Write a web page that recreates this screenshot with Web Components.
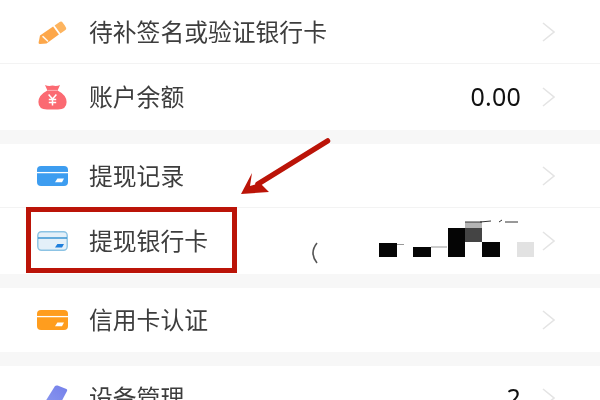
<!DOCTYPE html>
<html lang="zh">
<head>
<meta charset="utf-8">
<title>钱包</title>
<style>
html, body { margin: 0; height: 400px; overflow: hidden; background: #fff; }
body { font-family: "Noto Sans CJK SC", "Noto Sans", sans-serif; }
</style>
</head>
<body>
<wallet-page>
  <menu-group>
    <menu-row h="64">
      <svg slot="icon" width="31" height="26" viewBox="0 0 31 26">
        <path d="M17.6 6.4 L22.6 2.9 Q23.8 2.2 25 2.8 L27.8 6.6 L29.2 9 Q29.4 10.4 28.4 11.1 L23.4 14.6 Z" fill="#fdb45f"/>
        <path d="M16.1 7.4 L21.9 15.6 L9.5 24.6 L3 25 Q1.5 25 1.6 23.5 L3 16.5 Z" fill="#fda74a"/>
        <path d="M6 17.6 L10.6 22" stroke="#fff" stroke-width="1.5" stroke-linecap="round" opacity=".9"/>
      </svg>
      <span>待补签名或验证银行卡</span>
    </menu-row>
    <menu-row h="66">
      <svg slot="icon" width="31" height="26" viewBox="0 0 31 26">
        <path d="M8 1 Q11 2.4 15.5 1.6 Q20 2.4 23 1 L20.6 6.4 Q29.6 11 29.6 18 Q29.6 25.4 21 25.4 L10 25.4 Q1.4 25.4 1.4 18 Q1.4 11 10.4 6.4 Z" fill="#fb6a72"/>
        <path d="M10.4 6.4 H20.6" stroke="#fdb0b4" stroke-width="1"/>
        <path d="M11.6 10.6 L15.5 15 L19.4 10.6 M15.5 15 V21.4 M11.8 15.6 H19.2 M11.8 18.4 H19.2" fill="none" stroke="#fff" stroke-width="1.5"/>
      </svg>
      <span>账户余额</span>
      <span slot="value">0.00</span>
    </menu-row>
  </menu-group>
  <menu-group>
    <menu-row h="64">
      <bank-card slot="icon" color="#3d9df0"></bank-card>
      <span>提现记录</span>
    </menu-row>
    <menu-row h="66">
      <svg slot="icon" width="31" height="20" viewBox="0 0 31 20">
        <rect x=".8" y=".8" width="29.4" height="18.4" rx="3.6" fill="#e4f0f9" stroke="#8cc3e4" stroke-width="1.4"/>
        <path d="M1 7 H30" stroke="#2f8fd0" stroke-width="1.4"/>
        <path d="M20.4 13 H27 L25 16.4 H18 Z" fill="#1f7fdc"/>
      </svg>
      <span>提现银行卡</span>
    </menu-row>
  </menu-group>
  <menu-group>
    <menu-row h="64">
      <bank-card slot="icon" color="#ff9d1e"></bank-card>
      <span>信用卡认证</span>
    </menu-row>
  </menu-group>
  <menu-group>
    <menu-row h="64">
      <svg slot="icon" width="31" height="26" viewBox="0 0 31 26">
        <defs>
          <linearGradient id="dev" x1="0" y1="1" x2="1" y2="0">
            <stop offset="0" stop-color="#8f9cf0"/>
            <stop offset="1" stop-color="#7480ea"/>
          </linearGradient>
        </defs>
        <path d="M18 1 Q19 0 20.6 .6 L29.4 4 Q30.6 4.8 30 6 L20 25 L3 25 Z" fill="url(#dev)"/>
      </svg>
      <span>设备管理</span>
      <span slot="value">2</span>
    </menu-row>
  </menu-group>
  <annotation-layer></annotation-layer>
</wallet-page>

<script>
class WalletPage extends HTMLElement {
  constructor() {
    super();
    this.attachShadow({ mode: 'open' });
  }
  connectedCallback() {
    this.shadowRoot.innerHTML = `
      <style>
        :host { display: block; position: relative; width: 600px; height: 400px; overflow: hidden; background: #fff; }
        .list { display: flex; flex-direction: column; gap: 14px; background: #f7f7f7; filter: blur(.35px); }
      </style>
      <div class="list"><slot></slot></div>
      <slot name="overlay"></slot>
    `;
    const layer = this.querySelector('annotation-layer');
    if (layer) layer.slot = 'overlay';
  }
}

class MenuGroup extends HTMLElement {
  constructor() {
    super();
    this.attachShadow({ mode: 'open' });
  }
  connectedCallback() {
    this.shadowRoot.innerHTML = `
      <style>
        :host { display: flex; flex-direction: column; background: #fff; }
      </style>
      <slot></slot>
    `;
  }
}

class MenuRow extends HTMLElement {
  constructor() {
    super();
    this.attachShadow({ mode: 'open' });
  }
  connectedCallback() {
    const h = this.getAttribute('h') || 64;
    this.shadowRoot.innerHTML = `
      <style>
        :host {
          display: grid;
          grid-template-columns: 31px 1fr auto 13px;
          column-gap: 21px;
          align-items: center;
          box-sizing: border-box;
          height: ${h}px;
          padding: 0 45px 0 37px;
          border-bottom: 1px solid #f3f3f3;
          background: #fff;
          color: #3d3d3d;
          font-size: 23.8px;
          line-height: 30px;
        }
        :host(:last-child) { border-bottom: 0; }
        .icon { display: flex; justify-content: center; align-items: center; }
        .label { padding-bottom: 2px; }
        .value { font-family: "Noto Sans", sans-serif; font-size: 25px; letter-spacing: .2px; color: #111; padding-bottom: 2px; }
        svg { display: block; }
      </style>
      <div class="icon"><slot name="icon"></slot></div>
      <div class="label"><slot></slot></div>
      <div class="value"><slot name="value"></slot></div>
      <svg width="13" height="20" viewBox="0 0 13 20"><path d="M1 1 L12 10 L1 19" fill="none" stroke="#e4e4e4" stroke-width="1.6"/></svg>
    `;
  }
}

class BankCard extends HTMLElement {
  constructor() {
    super();
    this.attachShadow({ mode: 'open' });
  }
  connectedCallback() {
    const c = this.getAttribute('color');
    this.shadowRoot.innerHTML = `
      <style>
        :host { display: block; width: 31px; height: 20px; }
        svg { display: block; }
      </style>
      <svg width="31" height="20" viewBox="0 0 31 20">
        <rect width="31" height="20" rx="4" fill="${c}"/>
        <path d="M0 6.6 H31" stroke="#fff" stroke-width="1.3"/>
        <path d="M20.4 12.6 H27 L25 16.2 H18 Z" fill="#fff"/>
      </svg>
    `;
  }
}

class AnnotationLayer extends HTMLElement {
  constructor() {
    super();
    this.attachShadow({ mode: 'open' });
  }
  connectedCallback() {
    // mosaic squares laid over the blanked out card number
    const blocks = [
      [379, 243, 18, 14, '#060606'],
      [413, 247, 18, 10, '#060606'],
      [448, 228, 17, 29, '#050505'],
      [465, 228, 17, 14, '#444'],
      [465, 222, 17, 6, '#b4b4b4'],
      [482, 242, 18, 15, '#060606'],
      [517, 242, 17, 15, '#e2e2e2']
    ].map(b => `<i style="left:${b[0]}px;top:${b[1]}px;width:${b[2]}px;height:${b[3]}px;background:${b[4]}"></i>`).join('');
    this.shadowRoot.innerHTML = `
      <style>
        :host { display: block; position: absolute; inset: 0; pointer-events: none; }
        i { position: absolute; display: block; }
        .box { position: absolute; left: 26px; top: 207px; width: 211px; height: 66px; box-sizing: border-box; border: 5px solid #bb1408; }
        svg { position: absolute; left: 0; top: 0; }
      </style>
      <div class="box"></div>
      ${blocks}
      <svg width="600" height="400" viewBox="0 0 600 400">
        <path d="M327.5 141 L258 184" stroke="#bb1408" stroke-width="5.5" stroke-linecap="round" fill="none"/>
        <path d="M241 194 L252 173 L250 186 L260 183 L269 192 Z" fill="#bb1408"/>
        <path d="M317 243 Q309 253 317 263" fill="none" stroke="#555" stroke-width="1.6"/>
        <path d="M465 222 H482 M480 222 L491 221 M499 222 L502 220 M505 222 H518" stroke="#333" stroke-width="1"/>
        <path d="M397 244.500 H404 M431 247 H447" stroke="#999" stroke-width="1"/>
      </svg>
    `;
  }
}

customElements.define('wallet-page', WalletPage);
customElements.define('menu-group', MenuGroup);
customElements.define('menu-row', MenuRow);
customElements.define('bank-card', BankCard);
customElements.define('annotation-layer', AnnotationLayer);
</script>
</body>
</html>
